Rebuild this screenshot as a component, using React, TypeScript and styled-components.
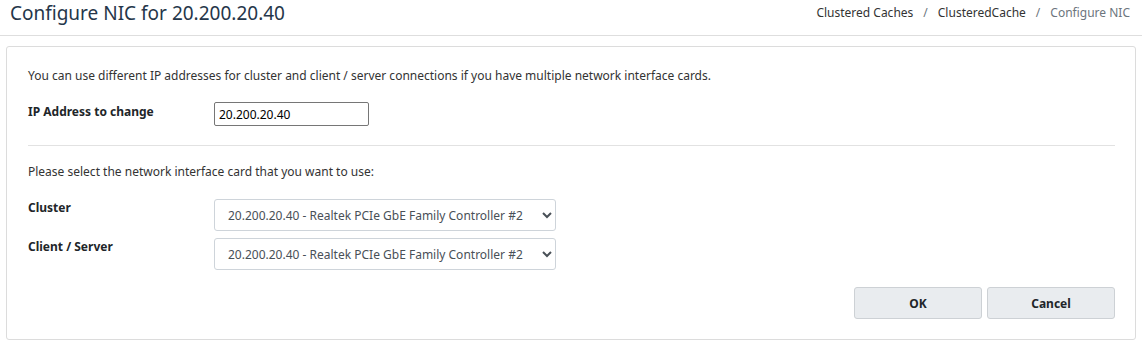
import React from "react";
import styled, { createGlobalStyle } from "styled-components";

const GlobalStyle = createGlobalStyle`
  html, body {
    margin: 0;
    padding: 0;
    background: #ffffff;
  }
  body {
    font-family: "Noto Sans", "Open Sans", "Liberation Sans", sans-serif;
    font-size: 12px;
    color: #333;
  }
`;

const Page = styled.div`
  width: 1142px;
  height: 344px;
  box-sizing: border-box;
`;

const Header = styled.div`
  display: flex;
  align-items: center;
  justify-content: space-between;
  height: 36px;
  padding: 0 12px 10px 10px;
  box-sizing: border-box;
  border-bottom: 1px solid #dedede;
`;

const Title = styled.h1`
  margin: 0;
  font-size: 19px;
  font-weight: 400;
  color: #25364a;
`;

const Breadcrumb = styled.div`
  display: flex;
  align-items: center;
  gap: 10px;
  font-size: 12px;
  color: #333;
`;

const Crumb = styled.span<{ $active?: boolean }>`
  color: ${(p) => (p.$active ? "#6c757d" : "#333")};
`;

const Sep = styled.span`
  color: #6c757d;
`;

const Panel = styled.div`
  margin: 10px 6px 0 6px;
  border: 1px solid #dcdcdc;
  border-radius: 3px;
  padding: 19px 20px 19px 21px;
  height: 294px;
  box-sizing: border-box;
`;

const Note = styled.p`
  margin: 0 0 16px 0;
  line-height: 20px;
`;

const Row = styled.div`
  display: flex;
  align-items: flex-start;
  margin-bottom: 6px;
`;

const Label = styled.label`
  width: 186px;
  font-weight: 700;
  color: #212529;
  line-height: 20px;
`;

const TextInput = styled.input`
  width: 155px;
  height: 24px;
  box-sizing: border-box;
  border: 1px solid #767676;
  border-radius: 2px;
  padding: 0 4px;
  font-family: inherit;
  font-size: 12px;
  color: #000;
`;

const Divider = styled.hr`
  border: 0;
  border-top: 1px solid #e2e2e2;
  margin: 19px 0 16px 0;
`;

const SelectNote = styled(Note)`
  margin-bottom: 16px;
`;

const Select = styled.select`
  width: 342px;
  height: 32px;
  box-sizing: border-box;
  border: 1px solid #ced4da;
  border-radius: 3px;
  padding: 0 9px;
  font-family: inherit;
  font-size: 12px;
  color: #495057;
  background: #fff;
  margin-top: 1px;
`;

const Actions = styled.div`
  display: flex;
  justify-content: flex-end;
  gap: 5px;
  margin-top: 17px;
`;

const Button = styled.button`
  width: 128px;
  height: 32px;
  border: 1px solid #cdd1d5;
  border-radius: 3px;
  background: #e9ecef;
  font-family: inherit;
  font-size: 12px;
  font-weight: 700;
  color: #212529;
`;

const nicOption = "20.200.20.40 - Realtek PCIe GbE Family Controller #2";

export default function App() {
  return (
    <Page>
      <GlobalStyle />
      <Header>
        <Title>Configure NIC for 20.200.20.40</Title>
        <Breadcrumb>
          <Crumb>Clustered Caches</Crumb>
          <Sep>/</Sep>
          <Crumb>ClusteredCache</Crumb>
          <Sep>/</Sep>
          <Crumb $active>Configure NIC</Crumb>
        </Breadcrumb>
      </Header>
      <Panel>
        <Note>
          You can use different IP addresses for cluster and client / server
          connections if you have multiple network interface cards.
        </Note>
        <Row>
          <Label>IP Address to change</Label>
          <TextInput defaultValue="20.200.20.40" />
        </Row>
        <Divider />
        <SelectNote>
          Please select the network interface card that you want to use:
        </SelectNote>
        <Row>
          <Label>Cluster</Label>
          <Select defaultValue={nicOption}>
            <option>{nicOption}</option>
          </Select>
        </Row>
        <Row>
          <Label>Client / Server</Label>
          <Select defaultValue={nicOption}>
            <option>{nicOption}</option>
          </Select>
        </Row>
        <Actions>
          <Button>OK</Button>
          <Button>Cancel</Button>
        </Actions>
      </Panel>
    </Page>
  );
}
